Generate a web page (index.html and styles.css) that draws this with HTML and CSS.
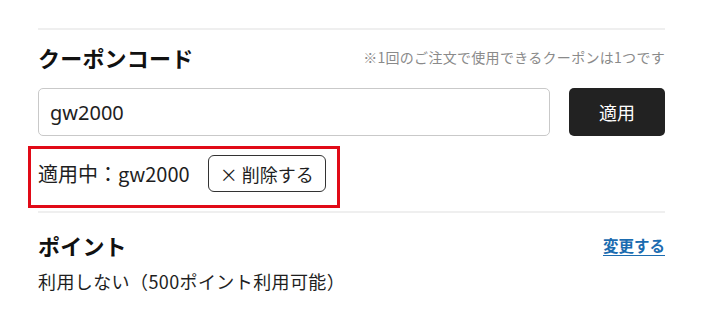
FILE: index.html
```html
<!DOCTYPE html>
<html lang="ja">
<head>
<meta charset="utf-8">
<link rel="stylesheet" href="styles.css">
</head>
<body>
<div class="wrap">
  <div class="divider first"></div>
  <div class="head-row">
    <h2 class="title">クーポンコード</h2>
    <span class="note">※1回のご注文で使用できるクーポンは1つです</span>
  </div>
  <div class="input-row">
    <input class="code-input" type="text" value="gw2000">
    <button class="apply-btn">適用</button>
  </div>
  <div class="applied">
    <span class="applied-text">適用中：gw2000</span>
    <button class="remove-btn">× 削除する</button>
  </div>
  <div class="divider second"></div>
  <div class="head-row points-head">
    <h2 class="title">ポイント</h2>
    <a class="change-link" href="#">変更する</a>
  </div>
  <p class="points-text">利用しない（500ポイント利用可能）</p>
</div>
</body>
</html>
```
FILE: styles.css
```css
html, body {
  margin: 0;
  padding: 0;
  background: #fff;
}
body {
  font-family: "Noto Sans CJK JP", "Noto Sans", sans-serif;
  color: #1e1e1e;
}
.wrap {
  padding: 28px 36px 0 38px;
}
.divider {
  height: 2px;
  background: #efefef;
}
.head-row {
  display: flex;
  justify-content: space-between;
  align-items: center;
  margin-top: 11px;
  height: 32px;
}
.title {
  margin: 0;
  font-size: 22px;
  font-weight: 700;
  line-height: 32px;
  color: #111;
  letter-spacing: 0.2px;
}
.note {
  font-size: 14px;
  color: #8a8a8a;
  letter-spacing: 0.3px;
}
.input-row {
  display: flex;
  gap: 19px;
  margin-top: 15px;
}
.code-input {
  flex: 1;
  height: 48px;
  box-sizing: border-box;
  border: 1px solid #c9c9c9;
  border-radius: 5px;
  padding: 0 11px;
  font-family: "Noto Sans", "Noto Sans CJK JP", sans-serif;
  font-size: 20px;
  color: #1e1e1e;
  outline: none;
}
.apply-btn {
  width: 96px;
  height: 48px;
  border: none;
  border-radius: 5px;
  background: #222;
  color: #fff;
  font-family: "Noto Sans CJK JP", sans-serif;
  font-size: 18px;
}
.applied {
  display: flex;
  align-items: center;
  gap: 18px;
  margin: 10px 0 0 -10px;
  width: 312px;
  height: 62px;
  box-sizing: border-box;
  border: 3px solid #e10a17;
  padding: 6px 0 13px 7px;
}
.applied-text {
  font-size: 20px;
  color: #1e1e1e;
}
.remove-btn {
  height: 37px;
  box-sizing: border-box;
  border: 1.5px solid #333;
  border-radius: 6px;
  background: #fff;
  padding: 0 11px;
  font-family: "Noto Sans CJK JP", sans-serif;
  font-size: 18px;
  color: #1e1e1e;
}
.divider.second {
  margin-top: 3px;
}
.points-head {
  margin-top: 16px;
}
.change-link {
  font-size: 15.5px;
  font-weight: 700;
  color: #1b6cb0;
  text-decoration: underline;
  text-underline-offset: 3px;
}
.points-text {
  margin: 7px 0 0;
  font-size: 18px;
  line-height: 27px;
  color: #1e1e1e;
  letter-spacing: 0.4px;
}
```
